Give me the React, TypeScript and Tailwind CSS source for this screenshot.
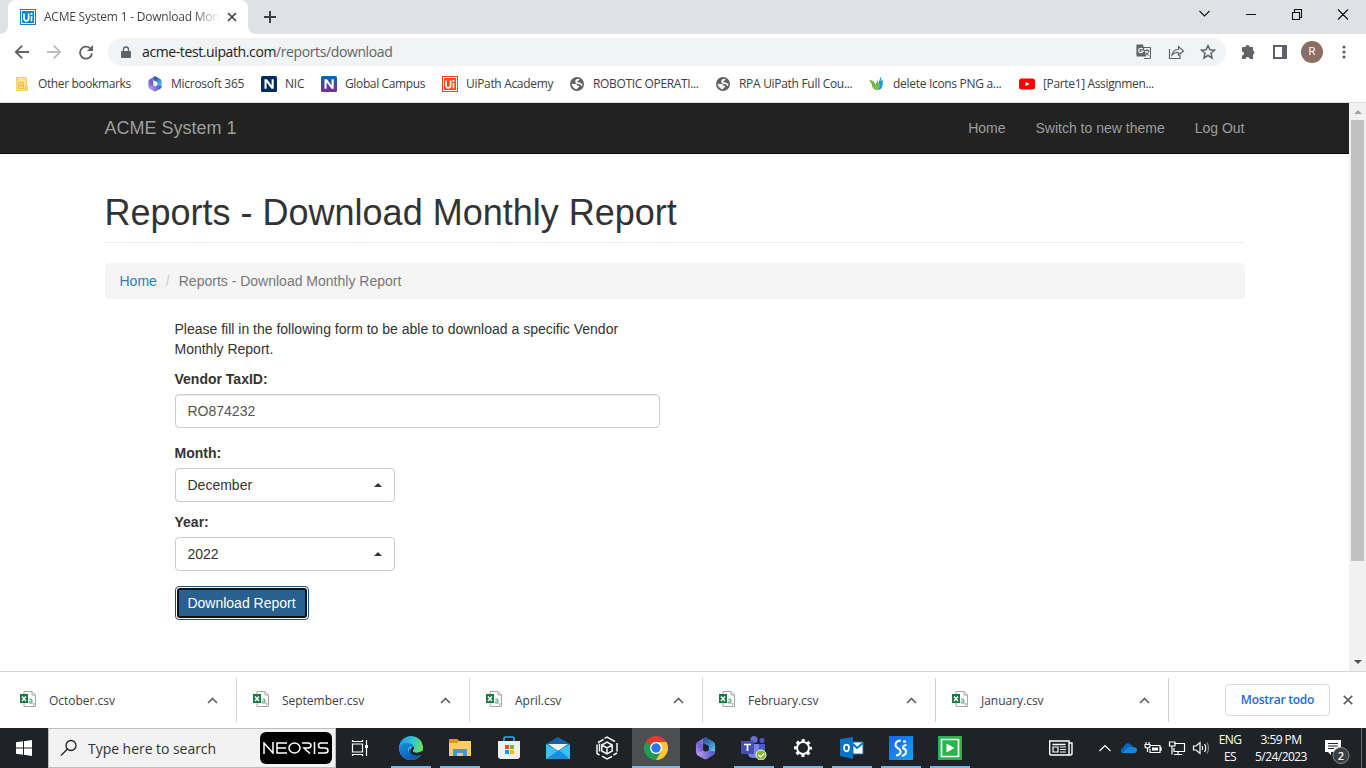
import type { ReactNode } from "react";

const UI = "font-['Open_Sans','Noto_Sans',sans-serif]";

function UiBadge({ color }: { color: string }) {
  return (
    <svg width="16" height="16" viewBox="0 0 16 16">
      <rect width="16" height="16" fill={color} />
      <rect x="1.5" y="1.5" width="13" height="13" fill="none" stroke="#fff" strokeWidth="1" />
      <path d="M4 4.5V9.3Q4 11.8 6.3 11.8T8.6 9.3V4.5M11.5 7V12.2" fill="none" stroke="#fff" strokeWidth="1.7" />
      <circle cx="11.5" cy="4.9" r="1.1" fill="#fff" />
    </svg>
  );
}

function NBadge({ id, top, bottom }: { id: string; top: string; bottom: string }) {
  return (
    <svg width="16" height="16" viewBox="0 0 16 16">
      <defs>
        <linearGradient id={id} x1="0" y1="0" x2="0" y2="1">
          <stop offset="0" stopColor={top} />
          <stop offset="1" stopColor={bottom} />
        </linearGradient>
      </defs>
      <rect width="16" height="16" rx="1.5" fill={`url(#${id})`} />
      <path d="M3.500 12.800V3.300H6L10.600 9.500V3.300H12.700V12.800H10.500L5.600 6.300V12.800Z" fill="#fff" />
    </svg>
  );
}

function M365({ id, size }: { id: string; size: number }) {
  return (
    <svg width={size} height={size} viewBox="0 0 24 24">
      <defs>
        <linearGradient id={id + "a"} x1="1" y1="0" x2="0" y2="1">
          <stop offset="0" stopColor="#8f93f0" />
          <stop offset=".55" stopColor="#6d5fd0" />
          <stop offset="1" stopColor="#c59cf2" />
        </linearGradient>
        <linearGradient id={id + "b"} x1="0" y1="0" x2=".6" y2="1">
          <stop offset="0" stopColor="#2b3f9c" />
          <stop offset="1" stopColor="#55c8f0" />
        </linearGradient>
        <linearGradient id={id + "c"} x1="0" y1="0" x2="1" y2="0">
          <stop offset="0" stopColor="#c59cf2" />
          <stop offset="1" stopColor="#4654c4" />
        </linearGradient>
      </defs>
      <path d="M13.500 .8L9.500 3V14.500L4.500 19Q2 17.500 2 15V8.500Q2 6 4 4.800L10.500 1Q12 .2 13.500 .8Z" fill={`url(#${id}a)`} />
      <path d="M11 .8Q12.500 .3 14 1.200L20 4.600Q22 6 22 8.500V15.500Q22 17.500 20 18.700L15.500 16V9.500L9.500 6.500V3Q9.500 1.500 11 .8Z" fill={`url(#${id}b)`} />
      <path d="M3 17.500L9.500 14L12 15.500L15.500 14L22 15Q22 17.700 20 19L14 22.600Q12 23.700 10 22.600L4 19.200Q3 18.500 3 17.500Z" fill={`url(#${id}c)`} />
    </svg>
  );
}

function Globe() {
  return (
    <svg width="16" height="16" viewBox="0 0 16 16">
      <circle cx="8" cy="8" r="7" fill="#5f6368" />
      <path d="M2.6 7.5Q5 8.3 7 8Q8.6 8.2 7.8 9.5Q10.6 9 10.2 10.8Q8.5 12.3 7.4 13.3Q3.4 12.3 2.6 7.5ZM8.3 2.8Q9.7 2.8 10.8 3.3Q10.4 4.7 8.9 4.8Q7.4 5.3 8.8 6.2Q10.6 6 12.2 7.5L13.5 8Q13.3 9.6 12.6 10.3Q11.6 8.4 10 8.1Q6.8 8 6.4 6.5Q5.6 4 8.3 2.8Z" fill="#fff" />
    </svg>
  );
}

function Bookmark({ icon, text, box, label }: { icon: ReactNode; text: string; box: string; label: string }) {
  return (
    <div className={`flex shrink-0 items-center gap-2 ${box}`}>
      <div className="flex w-4 shrink-0 justify-center">{icon}</div>
      <span className={`whitespace-nowrap text-[12px] ${label}`}>{text}</span>
    </div>
  );
}

function BrowserChrome() {
  return (
    <div className={`${UI} text-[#3c4043]`}>
      <div className="flex h-[34px] bg-[#dee1e6]">
        <div className="relative ml-2 flex h-[34px] w-60 shrink-0 items-center rounded-t-lg bg-white pl-3">
          <svg className="absolute -left-2 bottom-0" width="8" height="8"><path d="M8 0A8 8 0 0 1 0 8H8Z" fill="#fff" /></svg>
          <svg className="absolute -right-2 bottom-0" width="8" height="8"><path d="M0 0A8 8 0 0 0 8 8H0Z" fill="#fff" /></svg>
          <UiBadge color="#0f83cc" />
          <div className="ml-2 w-[176px] whitespace-nowrap bg-linear-to-r from-[#3c4043] from-85% to-transparent bg-clip-text text-[12px] tracking-[-0.22px] text-transparent">ACME System 1 - Download Mon</div>
          <svg className="ml-[7px]" width="10" height="10" viewBox="0 0 10 10"><path d="M1 1L9 9M9 1L1 9" stroke="#3c4043" strokeWidth="1.7" /></svg>
        </div>
        <svg className="ml-4 mt-[11px]" width="12" height="12"><path d="M6 0V12M0 6H12" stroke="#3c4043" strokeWidth="2" /></svg>
        <div className="flex-1" />
        <svg className="mr-px mt-[9px]" width="166" height="12" fill="none" stroke="#111" strokeWidth="1.1">
          <path d="M.5 2L5.5 7L10.500 2M47 5.500H57M93.500 3.500H100.500V10.500H93.500ZM95.500 3.500V.5H102.500V8.500H100.500M139 .5L149 10.500M149 .5L139 10.500" />
        </svg>
      </div>
      <div className="flex h-9 items-center bg-white">
        <svg className="ml-[14px]" width="80" height="18" viewBox="0 0 80 18" fill="none" strokeWidth="1.8">
          <path d="M15 9H2M8.200 2.600L1.800 9L8.200 15.400" stroke="#5f6368" />
          <path d="M33 9H46M39.800 2.600L46.200 9L39.800 15.400" stroke="#babcbe" />
          <path d="M76.200 5.300A6 6 0 1 0 78 10.500" stroke="#5f6368" />
          <path d="M79 2V8H73Z" fill="#5f6368" stroke="none" />
        </svg>
        <div className="ml-[14px] flex h-7 w-[1118px] shrink-0 items-center rounded-full bg-[#f1f3f4] pl-[13px]">
          <svg width="10" height="13" viewBox="0 0 10 13"><path d="M1 5H9Q10 5 10 6V11Q10 12 9 12H1Q0 12 0 11V6Q0 5 1 5Z" fill="#5f6368" /><path d="M2.500 5V3.500A2.500 2.500 0 0 1 7.500 3.500V5" fill="none" stroke="#5f6368" strokeWidth="1.300" /></svg>
          <span className="ml-[11px] whitespace-nowrap text-[14px] leading-5 tracking-[-0.39px] text-[#202124]">acme-test.uipath.com<span className="text-[#5f6368]">/reports/download</span></span>
          <div className="flex-1" />
          <svg className="mr-[8px]" width="82" height="18" viewBox="0 0 82 18" fill="none" stroke="#5f6368" strokeWidth="1.200">
            <path d="M1 2H6.500L9.500 13H2Q1 13 1 12Z" fill="#5f6368" />
            <path d="M7 4.500H14.500V15.500H8M8.500 7.500H13.500M11 6V8.500M13 8Q12 11 9 13M9.500 9.500L13.500 13" strokeWidth="1" />
            <path d="M6.700 6.200A2.200 2.200 0 1 0 7 8.200H5" stroke="#f1f3f4" />
            <path d="M33.500 6V15.500H44V12M36 12Q37 6.500 42.500 6.500V3.500L47.500 8L42.500 12V9.500Q38.500 9.200 36 12Z" />
            <path transform="translate(7 0)" d="M65 2.500L66.900 6.800L71.500 7.200L68 10.300L69.100 15L65 12.500L60.900 15L62 10.300L58.500 7.200L63.100 6.800Z" strokeWidth="1.500" />
          </svg>
        </div>
        <svg className="ml-[15px]" width="15" height="16" viewBox="0 0 15 16"><path d="M2 3H4.500A2 2 0 0 1 8.600 3H12V6.500A2.100 2.100 0 0 1 12 10.500V15H8.600A2 2 0 0 0 4.600 15H1V11.500A2 2 0 0 0 1 7.500V4Q1 3 2 3Z" fill="#5f6368" /></svg>
        <svg className="ml-[17px]" width="14" height="14"><path d="M1 1H13V13H1ZM10 1V13M11 1V13" fill="none" stroke="#5f6368" strokeWidth="2" /></svg>
        <div className="ml-[14px] flex size-[22px] items-center justify-center rounded-full bg-[#8d6e63] font-['Roboto',sans-serif] text-[11px] text-white">R</div>
        <svg className="ml-[19px]" width="4" height="14" fill="#5f6368"><circle cx="2" cy="2" r="1.600" /><circle cx="2" cy="7" r="1.600" /><circle cx="2" cy="12" r="1.600" /></svg>
      </div>
      <div className="flex h-[33px] items-center border-b border-[#dadce0] bg-white pb-1 pl-[14px]">
        <Bookmark box="w-[133px]" label="tracking-[-0.38px]" text="Other bookmarks" icon={<svg width="16" height="16"><path d="M2.500 1.500H12.500V10.500H13.500V14.500H2.500Z" fill="#fde293" stroke="#f3cf63" /><path d="M4.500 6.500H9.500V12.500H4.500ZM7 6.500V12.500M4.500 9.500H9.500M11.500 10.500V14" stroke="#e9be45" fill="none" /></svg>} />
        <Bookmark box="w-[114px]" label="tracking-[-0.27px]" text="Microsoft 365" icon={<M365 id="bm" size={16} />} />
        <Bookmark box="w-[60px]" label="tracking-[-0.2px]" text="NIC" icon={<NBadge id="n1" top="#002c5f" bottom="#002c5f" />} />
        <Bookmark box="w-[121px]" label="tracking-[-0.36px]" text="Global Campus" icon={<NBadge id="n2" top="#0069b4" bottom="#812a91" />} />
        <Bookmark box="w-[127px]" label="tracking-[-0.32px]" text="UiPath Academy" icon={<UiBadge color="#fa4616" />} />
        <Bookmark box="w-[146px]" label="tracking-[-0.36px]" text="ROBOTIC OPERATI..." icon={<Globe />} />
        <Bookmark box="w-[154px]" label="tracking-[-0.3px]" text="RPA UiPath Full Cou..." icon={<Globe />} />
        <Bookmark box="w-[150px]" label="tracking-[-0.3px]" text="delete Icons PNG a..." icon={<svg width="16" height="16"><path d="M0 4.500Q3 3.500 5 6Q6 7.500 6.500 9.500Q7 6 9 4Q10 9 9 14Q3.500 14 3 9Q2.500 6 0 4.500Z" fill="#5fb63b" /><path d="M9 11Q9.500 5 12 .5Q13 3 11.500 5L14 4Q14.500 6 12.500 7.500L14 7Q14.500 9 12.500 10.500L13.500 10.500Q12 14 8 14Z" fill="#1599d6" /><path d="M5 10Q9 11 10 7Q12 12 8 14Q4 14 3 10Z" fill="#8ac23f" /></svg>} />
        <Bookmark box="w-[150px]" label="tracking-[-0.35px]" text="[Parte1] Assignmen..." icon={<svg width="16" height="16"><rect y="2.500" width="16" height="11" rx="2.500" fill="#f00" /><path d="M6.500 5.800L10.500 8L6.500 10.200Z" fill="#fff" /></svg>} />
      </div>
    </div>
  );
}

function SelectBox({ value }: { value: string }) {
  return (
    <div className="flex h-[34px] w-[220px] items-center justify-between rounded border border-[#ccc] pl-3 pr-3">
      <span>{value}</span>
      <svg width="8" height="4"><path d="M0 4L4 0L8 4Z" fill="#333" /></svg>
    </div>
  );
}

function Page() {
  return (
    <div className="flex h-[568px] bg-white">
      <div className="w-[1349px] font-['Liberation_Sans',Arial,sans-serif] text-[14px] leading-5 text-[#333]">
        <nav className="flex h-[51px] items-center border-b border-[#080808] bg-[#222] pl-[104.5px] pr-[104.5px] text-[#9d9d9d]">
          <span className="text-[18px]">ACME System 1</span>
          <div className="ml-auto flex gap-[30px]"><span>Home</span><span>Switch to new theme</span><span>Log Out</span></div>
        </nav>
        <main className="ml-[104.5px] w-[1140px] pt-[39px]">
          <h1 className="h-[50px] border-b border-[#eee] text-[36px] font-normal leading-10">Reports - Download Monthly Report</h1>
          <div className="mt-5 flex h-9 items-center rounded bg-[#f5f5f5] px-[15px]">
            <span className="text-[#337ab7]">Home</span>
            <span className="px-[9px] text-[#ccc]">/</span>
            <span className="text-[#777]">Reports - Download Monthly Report</span>
          </div>
          <form className="ml-[70px] mt-5 w-[485px]">
            <p className="mb-[10px]">Please fill in the following form to be able to download a specific Vendor Monthly Report.</p>
            <div className="mb-[5px] font-bold">Vendor TaxID:</div>
            <div className="mb-[15px] flex h-[34px] items-center rounded border border-[#ccc] px-3 text-[#555] shadow-[inset_0_1px_1px_rgba(0,0,0,0.075)]">RO874232</div>
            <div className="mb-[5px] font-bold">Month:</div>
            <SelectBox value="December" />
            <div className="mb-[5px] mt-[10px] font-bold">Year:</div>
            <SelectBox value="2022" />
            <div className="mt-[15px] w-[134px] rounded-[4px] border border-[#204d74] bg-white p-px">
              <div className="flex h-[30px] items-center justify-center whitespace-nowrap rounded-[3px] border-2 border-[#101010] bg-[#286090] text-white">Download Report</div>
            </div>
          </form>
        </main>
      </div>
      <div className="flex w-[17px] flex-col items-center justify-between bg-[#f1f1f1] pb-[7px] pt-[7px]">
        <svg width="8" height="4"><path d="M0 4L4 0L8 4Z" fill="#a3a3a3" /></svg>
        <div className="mb-auto mt-[6px] h-[441px] w-[13px] bg-[#c1c1c1]" />
        <svg width="8" height="4"><path d="M0 0L4 4L8 0Z" fill="#505050" /></svg>
      </div>
    </div>
  );
}

function DownloadItem({ name }: { name: string }) {
  return (
    <div className="flex h-11 w-[233px] shrink-0 items-center border-r border-[#d0d1d4] pl-4 pr-[18px]">
      <svg className="mb-px" width="17" height="17" viewBox="0 0 17 17">
        <path d="M4 .5H12L15.500 4V15.500H4ZM12 .5V4H15.500" fill="#fff" stroke="#a6a6a6" />
        <rect x="0" y="3" width="8" height="9" fill="#187943" />
        <path d="M2 5.500L6 10M6 5.500L2 10" stroke="#fff" strokeWidth="1.400" />
        <path d="M9.200 8.300Q12 7 12 9.500V12.500M12 10Q9 9.700 9 11.500Q9.500 13 12 11.700M13.800 12V13.500L13 14.500" fill="none" stroke="#57a77b" />
      </svg>
      <span className="ml-3 pt-px text-[12px] tracking-[-0.02px]">{name}</span>
      <svg className="ml-auto" width="11" height="7"><path d="M1 6L5.500 1.500L10 6" fill="none" stroke="#5f6368" strokeWidth="1.700" /></svg>
    </div>
  );
}

function DownloadShelf() {
  return (
    <div className={`${UI} flex h-[57px] items-center border-t border-[#d6d7da] bg-white pl-1 text-[#3c4043]`}>
      {["October.csv", "September.csv", "April.csv", "February.csv", "January.csv"].map((name) => (
        <DownloadItem key={name} name={name} />
      ))}
      <div className="mb-px ml-[56px] flex h-8 w-[105px] shrink-0 items-center justify-center rounded border border-[#dadce0] text-[12px] font-semibold tracking-[-0.25px] text-[#1a6ae8]">Mostrar todo</div>
      <svg className="ml-[13px]" width="10" height="10"><path d="M.8 .8L9.200 9.200M9.200 .8L.8 9.200" stroke="#5f6368" strokeWidth="1.700" /></svg>
    </div>
  );
}

function Task({ children, line = false, active = false }: { children: ReactNode; line?: boolean; active?: boolean }) {
  return (
    <div className={`mr-px flex h-10 w-12 shrink-0 flex-col items-center ${active ? "bg-[#4c4e50]" : ""}`}>
      <div className="flex h-[38px] items-center justify-center pt-[2px]">{children}</div>
      <div className={`h-[2px] ${active ? "w-12" : "w-10"} ${line || active ? "bg-[#76b9ed]" : ""}`} />
    </div>
  );
}

function Taskbar() {
  return (
    <div className={`${UI} flex h-10 bg-[#1f2327] text-white`}>
      <div className="flex w-12 items-center justify-center">
        <svg width="16" height="16" fill="#fff"><path d="M0 2.300L7 1.300V7.500H0ZM8 1.200L16 0V7.500H8ZM0 8.500H7V14.700L0 13.700ZM8 8.500H16V16L8 14.800Z" /></svg>
      </div>
      <div className="flex w-72 items-center border border-[#bdbdbd] bg-[#f2f2f2] pl-[11px] text-[#333]">
        <svg width="18" height="18" fill="none" stroke="#222" strokeWidth="1.300"><circle cx="11" cy="6.500" r="5" /><path d="M7.300 10.200L1 16.500" /></svg>
        <span className="ml-[10px] whitespace-nowrap text-[14px] tracking-[-0.04px]">Type here to search</span>
        <div className="ml-auto mr-[3px] flex h-8 w-[72px] items-center justify-center rounded-[6px] bg-black">
          <svg width="66" height="12" viewBox="0 0 66 12" fill="none" stroke="#fff" strokeWidth="1.500">
            <path d="M1 12V1L10 11V0M24 1H14V11H24M14 6H23M39 1H45Q48 1 48 3.500Q48 6 45 6H41L47 11.500M51.500 0V12M65 1H58Q55.500 1 55.500 3.500Q55.500 6 58 6H62Q65 6 65 8.500Q65 11 62 11H55" />
            <ellipse cx="31.500" cy="6" rx="5.500" ry="5" />
          </svg>
        </div>
      </div>
      <div className="mr-[2px] flex"><Task>
        <svg width="18" height="18" fill="none" stroke="#fff" strokeWidth="1.200"><path d="M1.500 5H11.500V13H1.500ZM1.500 1V2.500H11.500V1M1.500 17V15.500H11.500V17M15.500 1V17" /><path d="M14 6H17V9H14Z" fill="#fff" stroke="none" /></svg>
      </Task></div>
      <Task line>
        <svg width="24" height="24" viewBox="0 0 24 24">
          <defs>
            <linearGradient id="e1" x1="0" y1=".2" x2="1" y2=".5"><stop stopColor="#1796e5" /><stop offset=".5" stopColor="#31c3d2" /><stop offset="1" stopColor="#67e853" /></linearGradient>
            <linearGradient id="e2" x1="0" y1="0" x2=".7" y2="1"><stop stopColor="#1992e0" /><stop offset="1" stopColor="#0b56ad" /></linearGradient>
          </defs>
          <circle cx="12" cy="12" r="12" fill="url(#e1)" />
          <path d="M0 12Q2 7 8 7Q14 7 15 11Q9 9 9 14Q10 20 18 19L22 18Q18 24 12 24Q1 24 0 12Z" fill="url(#e2)" />
          <path d="M14 16Q19 18 23 15L24 18L21 19Q15 21 11.500 18Q9 15.500 11 12Q11 15 14 16Z" fill="#173b68" />
          <path d="M15 11Q15.500 12.500 14 14Q13 16.500 18 17Q20.500 17 23 15L24 17L22 19Q14 20 12 16Q11 13 13 11Z" fill="#1f2327" />
        </svg>
      </Task>
      <Task line>
        <svg width="22" height="20"><path d="M0 1H8L10 3H22V18H0Z" fill="#f7cd62" /><path d="M0 1H8L10 3L8 5H0Z" fill="#d99a16" /><path d="M4 18V12Q4 11 5 11H17Q18 11 18 12V18H14V15H8V18Z" fill="#3c99dc" /></svg>
      </Task>
      <Task>
        <svg width="24" height="24"><path d="M7 7V2.500Q7 1 8.500 1H15.500Q17 1 17 2.500V7" fill="none" stroke="#28afea" strokeWidth="1.700" /><path d="M1 5H23V20Q23 23 20 23H4Q1 23 1 20Z" fill="#f0f0f0" /><path d="M8 9H12V13H8Z" fill="#f25022" /><path d="M13 9H17V13H13Z" fill="#7fba00" /><path d="M8 14H12V18H8Z" fill="#00a4ef" /><path d="M13 14H17V18H13Z" fill="#ffb900" /></svg>
      </Task>
      <Task>
        <svg width="24" height="22"><path d="M0 7L12 0L24 7V12H0Z" fill="#1363aa" /><path d="M2 7H22L12 14Z" fill="#f5f5f5" /><path d="M0 7L12 14L24 7V22H0Z" fill="#36c5f3" /><path d="M0 22L13 13L24 22Z" fill="#1a8fdf" /></svg>
      </Task>
      <Task>
        <svg width="24" height="24" fill="none" stroke="#f2f2f2" strokeWidth="1.500"><path d="M6.800 9L12 6L17.200 9V15L12 18L6.800 15ZM6.800 9L12 12L17.200 9M12 12V18M9.500 2.300L12 1L20 5.500M22 7V15.500M22 17L18.500 19M17 20.500L12 23L7 20.200M2 8.500V17.500L4.500 19M4.500 7.500V15.500M3 6.500L8.500 3.500" /></svg>
      </Task>
      <Task active>
        <svg width="24" height="24"><path d="M12 12L1.600 6A12 12 0 0 1 22.400 6Z" fill="#e33b2e" /><path d="M12 12L1.600 6A12 12 0 0 0 12 24L17.200 15Z" fill="#219b50" /><path d="M12 6H22.400A12 12 0 0 1 12 24L17.200 15Z" fill="#fcc934" /><circle cx="12" cy="12" r="6" fill="#fff" /><circle cx="12" cy="12" r="4.700" fill="#2879e8" /></svg>
      </Task>
      <Task><M365 id="tb" size={23} /></Task>
      <Task line>
        <svg width="26" height="24"><circle cx="13" cy="3.500" r="3.500" fill="#6970d0" /><circle cx="21" cy="4.500" r="2.500" fill="#5059c9" /><path d="M7 8H19V18Q18 22 13 22Q7 22 7 17Z" fill="#7b83eb" /><path d="M18 8H24V15Q23 19 18 18Z" fill="#5059c9" /><rect y="5" width="13" height="13" rx="1" fill="#454eb5" /><path d="M3 8.500H10M6.500 8.500V15" stroke="#fff" strokeWidth="1.700" /><circle cx="20" cy="19" r="5" fill="#7fba22" stroke="#f3f3f3" /><path d="M17.500 19L19.500 21L23 17.500" fill="none" stroke="#fff" strokeWidth="1.300" /></svg>
      </Task>
      <Task line>
        <svg width="20" height="20" fill="none" stroke="#fff"><circle cx="10" cy="10" r="6" strokeWidth="2" /><circle cx="10" cy="10" r="7.800" strokeWidth="2.300" strokeDasharray="3.100 3.026" strokeDashoffset="1.550" /></svg>
      </Task>
      <Task line>
        <svg width="24" height="22"><path d="M0 2L13 0V22L0 19Z" fill="#0873c4" /><path d="M13 5H23V17H13Z" fill="#fff" stroke="#0873c4" /><path d="M13 7L17 11L23 6" fill="none" stroke="#0873c4" strokeWidth="2" /><ellipse cx="6.500" cy="11" rx="2.500" ry="3.300" fill="none" stroke="#fff" strokeWidth="1.700" /></svg>
      </Task>
      <Task line>
        <svg width="24" height="24"><defs><linearGradient id="s" x1="0" y1="0" x2="1" y2="1"><stop stopColor="#1b63ed" /><stop offset="1" stopColor="#12a2f0" /></linearGradient></defs><rect width="24" height="24" fill="url(#s)" /><path d="M12 4.500Q6.500 5 6.500 8.500Q6.500 11 9.500 12.500Q12 14 11.500 16.500Q11 19 7 19.500M14 5.500H17M17.500 9Q13.500 9.500 14 12Q17.500 13.500 17 16.500Q16.500 19 13 20" fill="none" stroke="#fff" strokeWidth="2" /></svg>
      </Task>
      <Task line>
        <svg width="24" height="24"><rect width="24" height="24" fill="#2bb24c" /><path d="M3.500 3.500H20.500V20.500H3.500Z" fill="none" stroke="#fff" strokeWidth="1.700" /><path d="M8.500 7.500L16.500 12L8.500 16.500Z" fill="#fff" /></svg>
      </Task>
      <div className="flex-1" />
      <svg className="mt-3 shrink-0" width="164" height="18" fill="none" stroke="#fff" strokeWidth="1.200">
        <path d="M.7 1H20V15H2Q.7 15 .7 13.500ZM20 3H23V13.500Q23 15 21 15H19M3.500 4.500H16.500" strokeWidth="1.400" /><path d="M4 7H9V12H4ZM11 7H17M11 9.500H17M11 12H17" />
        <path d="M50.500 11L56 5.500L61.500 11" />
        <path d="M72 11Q72 8 75 7Q77 2 81 4Q83 5 83.500 7Q88 7 88 10Q88 13 85 13H75Q72 13 72 11Z" fill="#1688d9" stroke="none" />
        <path d="M72 11Q72 8 75 7Q77 2 81 4Q83 5 83 6.500Q78 7 74 12.500Q72 12 72 11Z" fill="#0867bd" stroke="none" />
        <path d="M101 5.500H111V12.500H101V9M112 7V11M97 2V4M100 2V4M96 4.500H101V6Q101 8 98.500 8Q96 8 96 6ZM98.500 8V12" /><path d="M103 7.500H109V10.500H103Z" fill="#fff" stroke="none" />
        <path d="M125 3.500H135.500V11.500H125V8M120.500 2H126V6H120.500ZM123 6V14.500M129 11.500V14M125 14.500H133" />
        <path d="M144.500 6H147L151 2.500V13.500L147 10H144.500ZM153 6Q154.500 8 153 10M155.500 4Q158 8 155.500 12" /><path d="M158 2.500Q161 8 158 13.500" stroke="#85888b" />
      </svg>
      <div className="w-[34px] pt-[3px] text-center text-[12px] leading-[17px] tracking-[-0.6px]">ENG<br />ES</div>
      <div className="ml-1 w-[60px] whitespace-nowrap pt-[3px] text-center text-[12px] leading-[17px] tracking-[-0.55px]">3:59 PM<br />5/24/2023</div>
      <svg className="ml-[14px] mr-[20px] mt-3 shrink-0" width="26" height="26"><path d="M0 0H16V12H6V15L3 12H0Z" fill="#fff" /><path d="M3 3.500H13M3 6H13M3 8.500H9" stroke="#1f2327" /><circle cx="16" cy="15.500" r="8" fill="#3b3e41" stroke="#898b8d" /><text x="16" y="19.500" textAnchor="middle" fontSize="11" fontWeight="600" fill="#fff">2</text></svg>
      <div className="-ml-[10px] mr-[4px] h-10 w-px bg-[#696c6f]" />
    </div>
  );
}
export default function App() {
  return (
    <div className="h-[768px] w-[1366px] overflow-hidden bg-white">
      <BrowserChrome />
      <Page />
      <DownloadShelf />
      <Taskbar />
    </div>
  );
}
